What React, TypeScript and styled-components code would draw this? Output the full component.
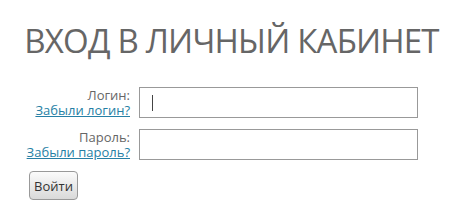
import React from "react";
import styled, { createGlobalStyle } from "styled-components";

const Global = createGlobalStyle`
  html, body { margin: 0; padding: 0; background: #fff; }
  body { font-family: "Open Sans", "DejaVu Sans", sans-serif; }
`;

const Page = styled.div`
  width: 459px;
  height: 212px;
  box-sizing: border-box;
  padding-top: 19px;
`;

const Title = styled.h1`
  margin: 0;
  padding-left: 4px;
  text-align: center;
  font-weight: 400;
  font-size: 33px;
  line-height: 44px;
  color: #666;
  letter-spacing: -0.8px;
`;

const Form = styled.form`
  margin-top: 24px;
  display: grid;
  grid-template-columns: 130px 279px;
  grid-auto-rows: 31px;
  column-gap: 9px;
  row-gap: 11px;
  align-items: start;
`;

const LabelCell = styled.div`
  display: flex;
  flex-direction: column;
  align-items: flex-end;
  padding-top: 1px;
  font-size: 13px;
  line-height: 15px;
  white-space: nowrap;
`;

const Label = styled.label`
  color: #666;
`;

const Link = styled.a`
  color: #267fa5;
  text-decoration: underline;
`;

const Field = styled.div`
  position: relative;
  width: 279px;
  height: 31px;
`;

const Input = styled.input`
  box-sizing: border-box;
  width: 100%;
  height: 100%;
  border: 1px solid #999;
  margin: 0;
  padding: 0 12px;
  font-size: 13px;
  outline: none;
  background: #fff;
  caret-color: transparent;
`;

const Caret = styled.span`
  position: absolute;
  left: 13px;
  top: 8px;
  width: 1px;
  height: 16px;
  background: #444;
  pointer-events: none;
`;

const ButtonRow = styled.div`
  grid-column: 1 / span 2;
  padding-left: 29px;
`;

const Button = styled.button`
  box-sizing: border-box;
  width: 49px;
  height: 29px;
  border: 1px solid #999;
  border-radius: 4px;
  background: linear-gradient(#fbfbfb, #d9d9d9);
  font-family: "Open Sans", "DejaVu Sans", sans-serif;
  font-size: 13px;
  color: #333;
  padding: 0;
`;

export default function App() {
  return (
    <Page>
      <Global />
      <Title>ВХОД В ЛИЧНЫЙ КАБИНЕТ</Title>
      <Form onSubmit={(e) => e.preventDefault()}>
        <LabelCell>
          <Label htmlFor="login">Логин:</Label>
          <Link href="#">Забыли логин?</Link>
        </LabelCell>
        <Field>
          <Input id="login" type="text" />
          <Caret />
        </Field>
        <LabelCell>
          <Label htmlFor="pass">Пароль:</Label>
          <Link href="#">Забыли пароль?</Link>
        </LabelCell>
        <Field>
          <Input id="pass" type="password" />
        </Field>
        <ButtonRow>
          <Button type="submit">Войти</Button>
        </ButtonRow>
      </Form>
    </Page>
  );
}
